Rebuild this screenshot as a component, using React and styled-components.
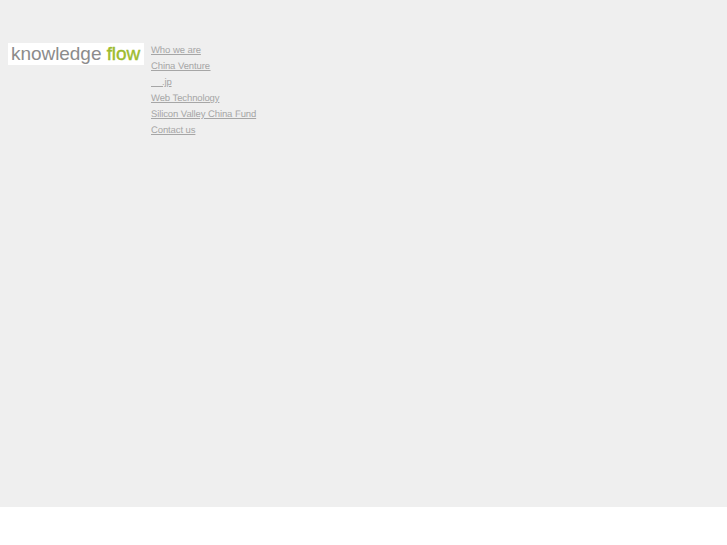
import React from "react";
import styled, { createGlobalStyle } from "styled-components";

const GlobalStyle = createGlobalStyle`
  html, body {
    margin: 0;
    padding: 0;
    background: #ffffff;
  }
`;

const Page = styled.div`
  height: 507px;
  background-color: #efefef;
  box-sizing: border-box;
  padding: 42px 0 0 8px;
  display: flex;
  align-items: flex-start;
  gap: 7px;
  font-family: "Liberation Sans", Arial, sans-serif;
`;

const Logo = styled.div`
  flex: none;
  width: 136px;
  height: 22px;
  margin-top: 1px;
  background-color: #ffffff;
  box-sizing: border-box;
  padding-left: 3px;
  font-size: 19px;
  line-height: 21px;
  letter-spacing: -0.05px;
  white-space: nowrap;
  color: #8c8c8c;
`;

const LogoAccent = styled.span`
  color: #9dbb2e;
  -webkit-text-stroke: 0.4px #9dbb2e;
`;

const Menu = styled.ul`
  list-style: none;
  margin: 0;
  padding: 1px 0 0;
`;

const MenuItem = styled.li`
  height: 16px;
  font-size: 9.5px;
  line-height: 16px;
  letter-spacing: -0.12px;
  word-spacing: 0.2px;
  text-rendering: geometricPrecision;
`;

const MenuLink = styled.a`
  color: #a6a6a6;
  text-decoration: underline;
  white-space: pre;
`;

const links = [
  "Who we are",
  "China Venture\u200a",
  "\u00a0\u00a0\u00a0\u00a0.jp",
  "Web Technology",
  "Silicon Valley China Fund",
  "Contact us",
];

export default function App() {
  return (
    <>
      <GlobalStyle />
      <Page>
        <Logo>
          knowledge <LogoAccent>flow</LogoAccent>
        </Logo>
        <Menu>
          {links.map((label) => (
            <MenuItem key={label}>
              <MenuLink href="#">{label}</MenuLink>
            </MenuItem>
          ))}
        </Menu>
      </Page>
    </>
  );
}
